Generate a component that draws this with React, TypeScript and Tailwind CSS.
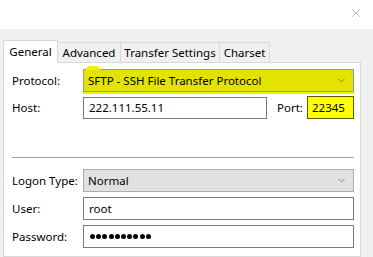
import { X, ChevronDown } from 'lucide-react';

const font = { fontFamily: '"Segoe UI", "Noto Sans", "Open Sans", sans-serif' };

function Tab({ label, active, width }: { label: string; active?: boolean; width: string }) {
  if (active) {
    return (
      <div className={`relative z-10 -mb-px h-[23px] ${width} border border-b-0 border-[#d9d9d9] bg-white pt-[2px] text-center text-[11.5px] text-black`}>
        {label}
      </div>
    );
  }
  return (
    <div className={`mt-[2px] h-[20px] ${width} whitespace-nowrap border border-l-0 border-b-0 border-[#d9d9d9] bg-[#f0f0f0] pt-[1px] text-center text-[11.5px] text-black`}>
      {label}
    </div>
  );
}

function Row({ label, children, className }: { label: string; children: React.ReactNode; className?: string }) {
  return (
    <div className={`flex items-center ${className ?? ''}`}>
      <div className="w-[71px] shrink-0 text-[11.5px] text-black">{label}</div>
      {children}
    </div>
  );
}

export default function App() {
  return (
    <div className="flex h-[257px] w-[373px] flex-col overflow-hidden bg-white" style={font}>
      <div className="flex h-[29px] shrink-0 items-start justify-end bg-white pr-[10px] pt-[6px]">
        <X size={14} strokeWidth={1} className="text-[#8a8a8a]" />
      </div>
      <div className="flex flex-1 flex-col bg-[#f0f0f0] pl-[3px] pr-[12px] pt-[11px]">
        <div className="flex items-start">
          <Tab label="General" active width="w-[55px]" />
          <Tab label="Advanced" width="w-[63px]" />
          <Tab label="Transfer Settings" width="w-[99px]" />
          <Tab label="Charset" width="w-[50px]" />
        </div>
        <div className="flex-1 border border-[#d9d9d9] bg-white pl-[8px] pr-[6px] pt-[6px]">
          <Row label="Protocol:">
            <div className="relative flex h-[23px] flex-1 items-center justify-between border border-[#9a9a9a] bg-[#e3e300] pl-[4px] pr-[6px] text-[11.5px] text-black shadow-[0_2px_0_#f0f000]">
              <span>SFTP - SSH File Transfer Protocol</span>
              <ChevronDown size={11} strokeWidth={1.3} className="text-[#444]" />
              <div className="absolute -top-[4px] left-[2px] h-[4px] w-[14px] rounded-t-full bg-[#f2f000]" />
            </div>
          </Row>
          <Row label="Host:" className="mt-[5px]">
            <div className="flex h-[22px] w-[184px] shrink-0 items-center border border-[#7a7a7a] bg-white px-[5px] text-[11.5px] text-black">
              222.111.55.11
            </div>
            <div className="ml-[10px] w-[30px] shrink-0 text-[11.5px] text-black">Port:</div>
            <div className="-mt-[1px] flex h-[23px] flex-1 items-center border border-[#5a5a00] bg-[#ffff00] px-[4px] text-[11.5px] text-black">
              22345
            </div>
          </Row>
          <div className="mt-[38px] h-px bg-[#a0a0a0]" />
          <Row label="Logon Type:" className="mt-[11px]">
            <div className="flex h-[23px] flex-1 items-center justify-between border border-[#adadad] bg-[#e1e1e1] pl-[4px] pr-[6px] text-[11.5px] text-black">
              <span>Normal</span>
              <ChevronDown size={11} strokeWidth={1.3} className="text-[#444]" />
            </div>
          </Row>
          <Row label="User:" className="mt-[5px]">
            <div className="flex h-[23px] flex-1 items-center border border-[#7a7a7a] bg-white px-[5px] text-[11.5px] text-black">
              root
            </div>
          </Row>
          <Row label="Password:" className="mt-[5px]">
            <div className="flex h-[23px] flex-1 items-center gap-[1.2px] border border-[#7a7a7a] bg-white px-[6px]">
              {Array.from({ length: 10 }).map((_, i) => (
                <span key={i} className="h-[5px] w-[5px] rounded-full bg-black" />
              ))}
            </div>
          </Row>
        </div>
      </div>
    </div>
  );
}
